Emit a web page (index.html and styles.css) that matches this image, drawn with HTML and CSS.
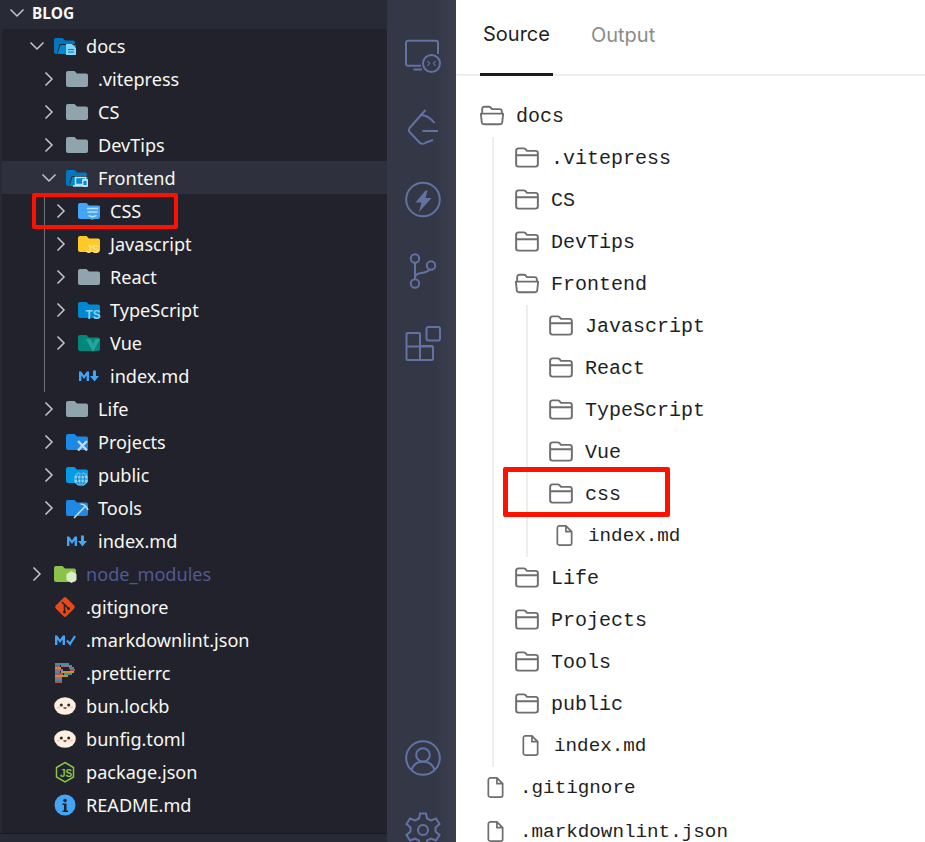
FILE: index.html
```html
<!DOCTYPE html>
<html lang="en">
<head>
<meta charset="utf-8">
<title>Blog tree</title>
<link rel="stylesheet" href="styles.css">
</head>
<body>
<svg class="defs" width="0" height="0" aria-hidden="true">
  <defs>
    <symbol id="ch-r" viewBox="0 0 14 16"><path d="M3.5 1.5 10 8l-6.500 6.500" fill="none" stroke="#c3c6cf" stroke-width="1.500"/></symbol>
    <symbol id="ch-d" viewBox="0 0 16 14"><path d="M1.500 3.500 8 10l6.500-6.500" fill="none" stroke="#c3c6cf" stroke-width="1.500"/></symbol>
    <symbol id="f-base" viewBox="0 0 22 18"><path d="M2 1h6.500l2.500 2.500h9a2 2 0 0 1 2 2V15a2 2 0 0 1-2 2H2a2 2 0 0 1-2-2V3a2 2 0 0 1 2-2z" fill="#90a4ae"/></symbol>
    <symbol id="f-blue" viewBox="0 0 22 18"><path d="M2 1h6.500l2.500 2.500h9a2 2 0 0 1 2 2V15a2 2 0 0 1-2 2H2a2 2 0 0 1-2-2V3a2 2 0 0 1 2-2z" fill="#1e88e5"/></symbol>
    <symbol id="f-open" viewBox="0 0 22 18"><path d="M2 1h6.500l2.500 2.500h8a2 2 0 0 1 2 2V7H7a2 2 0 0 0-2 1.500L3 17H2a2 2 0 0 1-2-2V3a2 2 0 0 1 2-2z" fill="#0277bd"/><path d="M6.500 8H22l-2.500 8a1.500 1.500 0 0 1-1.500 1H3.500z" fill="#0288d1"/></symbol>
    <symbol id="rf" viewBox="1.500 3.500 21 18"><path d="M2.500 6.500a2 2 0 0 1 2-2h4.700a2 2 0 0 1 1.500.700l1.300 1.500h7.500a2 2 0 0 1 2 2v9.800a2 2 0 0 1-2 2H4.500a2 2 0 0 1-2-2zM2.500 10.500h19" fill="none" stroke="#6e6e6e" stroke-width="1.700" stroke-linejoin="round"/></symbol>
    <symbol id="rfo" viewBox="1 3.500 22 18"><path d="M3 11V6.500a2 2 0 0 1 2-2h4.300a2 2 0 0 1 1.500.700l1.300 1.500h6.900a2 2 0 0 1 2 2V11M1.800 10.800h20.400l-.8 7.900a2 2 0 0 1-2 1.800H4.600a2 2 0 0 1-2-1.800z" fill="none" stroke="#6e6e6e" stroke-width="1.700" stroke-linejoin="round"/></symbol>
    <symbol id="rdoc" viewBox="4 1.500 17 22"><path d="M5 4.500a2 2 0 0 1 2-2h7l6 6v12a2 2 0 0 1-2 2H7a2 2 0 0 1-2-2zM14 2.500v6h6" fill="none" stroke="#6e6e6e" stroke-width="1.800" stroke-linejoin="round"/></symbol>
    <symbol id="md" viewBox="0 0 22 14"><path d="M1 12V2.500h2.200L6 6.500l2.700-4H11V12H8.600V6.500L6 10 3.400 6.500V12z" fill="#42a5f5"/><path d="M15 1.500h3V7h3l-4.500 5.500L12 7h3z" fill="#42a5f5"/></symbol>
    <symbol id="bun" viewBox="0 0 22 18"><ellipse cx="11" cy="9" rx="10.800" ry="8.700" fill="#fbf0df"/><circle cx="7.300" cy="8" r="1.500" fill="#2b2b2b"/><circle cx="14.700" cy="8" r="1.500" fill="#2b2b2b"/><path d="M9.200 10.300h3.600a1.800 1.800 0 0 1-3.600 0z" fill="#7a3030"/><ellipse cx="4.500" cy="10.500" rx="1.800" ry="1.100" fill="#f6c6cf"/><ellipse cx="17.500" cy="10.500" rx="1.800" ry="1.100" fill="#f6c6cf"/></symbol>
  </defs>
</svg>

<div class="window">
  <aside class="explorer">
    <div class="head">
      <svg class="chev-d"><use href="#ch-d"/></svg>
      <span class="head-title">BLOG</span>
    </div>
    <div class="tree">
      <div class="row d0">
        <svg class="chev-d"><use href="#ch-d"/></svg>
        <svg class="ico" viewBox="0 0 22 18"><use href="#f-open"/><path d="M12 7h6l4 4v7H12z" fill="#81d4fa"/><path d="M14 12.500h6M14 15h6" stroke="#0277bd" stroke-width="1.200"/></svg>
        <span>docs</span>
      </div>
      <div class="row d1"><svg class="chev-r"><use href="#ch-r"/></svg><svg class="ico"><use href="#f-base"/></svg><span>.vitepress</span></div>
      <div class="row d1"><svg class="chev-r"><use href="#ch-r"/></svg><svg class="ico"><use href="#f-base"/></svg><span>CS</span></div>
      <div class="row d1"><svg class="chev-r"><use href="#ch-r"/></svg><svg class="ico"><use href="#f-base"/></svg><span>DevTips</span></div>
      <div class="row d1 hover">
        <svg class="chev-d"><use href="#ch-d"/></svg>
        <svg class="ico" viewBox="0 0 22 18"><use href="#f-open"/><path d="M9.500 8.500h10v7h-10zM7 17h9" fill="#0288d1" stroke="#b3e5fc" stroke-width="1.500"/><rect x="16" y="10" width="6" height="8" rx="1" fill="#b3e5fc"/><rect x="17.500" y="12" width="3" height="4" fill="#0288d1"/></svg>
        <span>Frontend</span>
      </div>
      <div class="group">
        <div class="row d2">
          <svg class="chev-r"><use href="#ch-r"/></svg>
          <svg class="ico" viewBox="0 0 22 18"><path d="M2 1h6.500l2.500 2.500h9a2 2 0 0 1 2 2V15a2 2 0 0 1-2 2H2a2 2 0 0 1-2-2V3a2 2 0 0 1 2-2z" fill="#42a5f5"/><path d="M7.500 4H22l-1.500 11-6.500 3-6-3z" fill="#42a5f5"/><path d="M9 6.500h11M9.500 10h10M10.500 13.500l4 1.500 4-1.500" fill="none" stroke="#bbdefb" stroke-width="1.600"/></svg>
          <span>CSS</span>
        </div>
        <div class="row d2">
          <svg class="chev-r"><use href="#ch-r"/></svg>
          <svg class="ico" viewBox="0 0 22 18"><path d="M2 1h6.500l2.500 2.500h9a2 2 0 0 1 2 2V15a2 2 0 0 1-2 2H2a2 2 0 0 1-2-2V3a2 2 0 0 1 2-2z" fill="#ffca28"/><text x="8" y="18" class="ico-txt js">JS</text></svg>
          <span>Javascript</span>
        </div>
        <div class="row d2"><svg class="chev-r"><use href="#ch-r"/></svg><svg class="ico"><use href="#f-base"/></svg><span>React</span></div>
        <div class="row d2">
          <svg class="chev-r"><use href="#ch-r"/></svg>
          <svg class="ico" viewBox="0 0 22 18"><path d="M2 1h6.500l2.500 2.500h9a2 2 0 0 1 2 2V15a2 2 0 0 1-2 2H2a2 2 0 0 1-2-2V3a2 2 0 0 1 2-2z" fill="#0288d1"/><text x="7.500" y="18" class="ico-txt ts">TS</text></svg>
          <span>TypeScript</span>
        </div>
        <div class="row d2">
          <svg class="chev-r"><use href="#ch-r"/></svg>
          <svg class="ico" viewBox="0 0 22 18"><path d="M2 1h6.500l2.500 2.500h9a2 2 0 0 1 2 2V15a2 2 0 0 1-2 2H2a2 2 0 0 1-2-2V3a2 2 0 0 1 2-2z" fill="#00897b"/><path d="M8 5h14l-7 13z" fill="#26a69a"/><path d="M12.500 5h5L15 10z" fill="#00897b"/></svg>
          <span>Vue</span>
        </div>
        <div class="row d2 file"><svg class="ico ico-md"><use href="#md"/></svg><span>index.md</span></div>
      </div>
      <div class="row d1"><svg class="chev-r"><use href="#ch-r"/></svg><svg class="ico"><use href="#f-base"/></svg><span>Life</span></div>
      <div class="row d1">
        <svg class="chev-r"><use href="#ch-r"/></svg>
        <svg class="ico" viewBox="0 0 22 18"><use href="#f-blue"/><path d="M12 8l9 9.500M21 8l-9 9.500" stroke="#bbdefb" stroke-width="2.400"/></svg>
        <span>Projects</span>
      </div>
      <div class="row d1">
        <svg class="chev-r"><use href="#ch-r"/></svg>
        <svg class="ico" viewBox="0 0 22 18"><path d="M2 1h6.500l2.500 2.500h9a2 2 0 0 1 2 2V15a2 2 0 0 1-2 2H2a2 2 0 0 1-2-2V3a2 2 0 0 1 2-2z" fill="#039be5"/><circle cx="15" cy="13" r="7" fill="#81d4fa"/><path d="M8 13h14M15 6v14M10 9h10M10 17h10" stroke="#0277bd" stroke-width=".8" fill="none"/><ellipse cx="15" cy="13" rx="3.500" ry="7" fill="none" stroke="#0277bd" stroke-width=".8"/></svg>
        <span>public</span>
      </div>
      <div class="row d1">
        <svg class="chev-r"><use href="#ch-r"/></svg>
        <svg class="ico" viewBox="0 0 22 18"><use href="#f-blue"/><path d="M8 19 20 6.500M14.500 5c3 0 6 2.500 7.500 6" fill="none" stroke="#bbdefb" stroke-width="1.600"/></svg>
        <span>Tools</span>
      </div>
      <div class="row d1 file"><svg class="ico ico-md"><use href="#md"/></svg><span>index.md</span></div>
      <div class="row d0">
        <svg class="chev-r"><use href="#ch-r"/></svg>
        <svg class="ico" viewBox="0 0 22 18"><path d="M2 1h6.500l2.500 2.500h9a2 2 0 0 1 2 2V15a2 2 0 0 1-2 2H2a2 2 0 0 1-2-2V3a2 2 0 0 1 2-2z" fill="#8bc34a"/><path d="M17.500 6l5 3v6l-5 3-5-3V9z" fill="#dcedc8"/></svg>
        <span class="dim">node_modules</span>
      </div>
      <div class="row d0 file">
        <svg class="ico ico-tall" viewBox="0 0 22 22"><rect x="3.500" y="3.500" width="15" height="15" rx="2" transform="rotate(45 11 11)" fill="#e64a19"/><path d="M8 6l7 7M10.500 8.500v8" stroke="#21222c" stroke-width="1.500"/><circle cx="10.500" cy="16" r="1.500" fill="#21222c"/><circle cx="14.500" cy="12.500" r="1.500" fill="#21222c"/></svg>
        <span>.gitignore</span>
      </div>
      <div class="row d0 file">
        <svg class="ico ico-md" viewBox="0 0 22 14"><path d="M1 12V2.500h2.200L6 6.500l2.700-4H11V12H8.600V6.500L6 10 3.400 6.500V12z" fill="#42a5f5"/><path d="M13 7.500l3 3.500 5-8" fill="none" stroke="#42a5f5" stroke-width="2.200"/></svg>
        <span>.markdownlint.json</span>
      </div>
      <div class="row d0 file">
        <svg class="ico ico-tall" viewBox="0 0 22 22">
          <path d="M1 2h14" stroke="#56b3b4" stroke-width="1.500"/><path d="M1 4h5" stroke="#ea5e5e" stroke-width="1.500"/><path d="M7 4h11" stroke="#bf85bf" stroke-width="1.500"/><path d="M1 6h6" stroke="#f7ba3e" stroke-width="1.500"/><path d="M15 6h5" stroke="#56b3b4" stroke-width="1.500"/><path d="M1 8h8" stroke="#bf85bf" stroke-width="1.500"/><path d="M16 8h5" stroke="#ea5e5e" stroke-width="1.500"/><path d="M1 10h5" stroke="#56b3b4" stroke-width="1.500"/><path d="M7 10h13" stroke="#f7ba3e" stroke-width="1.500"/><path d="M1 12h8" stroke="#ea5e5e" stroke-width="1.500"/><path d="M10 12h8" stroke="#56b3b4" stroke-width="1.500"/><path d="M1 14h13" stroke="#f7ba3e" stroke-width="1.500"/><path d="M1 16h7" stroke="#bf85bf" stroke-width="1.500"/><path d="M1 18h7" stroke="#56b3b4" stroke-width="1.500"/><path d="M1 20h7" stroke="#ea5e5e" stroke-width="1.500"/>
        </svg>
        <span>.prettierrc</span>
      </div>
      <div class="row d0 file"><svg class="ico"><use href="#bun"/></svg><span>bun.lockb</span></div>
      <div class="row d0 file"><svg class="ico"><use href="#bun"/></svg><span>bunfig.toml</span></div>
      <div class="row d0 file">
        <svg class="ico ico-tall" viewBox="0 0 22 22"><path d="M11 1.500l8.500 5v9.500L11 21l-8.500-5V6.500z" fill="none" stroke="#8bc34a" stroke-width="1.500"/><text x="6" y="15.500" class="ico-txt node">JS</text></svg>
        <span>package.json</span>
      </div>
      <div class="row d0 file">
        <svg class="ico ico-tall" viewBox="0 0 22 22"><circle cx="11" cy="11" r="10.500" fill="#42a5f5"/><circle cx="11" cy="6.500" r="1.800" fill="#21222c"/><path d="M8.500 9.500h4v7h1.500v1.500H8.500v-1.500H10V11H8.500z" fill="#21222c"/></svg>
        <span>README.md</span>
      </div>
    </div>
    <div class="foot"></div>
    <div class="mark mark-left"></div>
  </aside>

  <nav class="activity">
    <div class="act-group">
      <svg class="act" viewBox="0 0 36 36"><path d="M16 27.700H3a2 2 0 0 1-2-2V4.700a2 2 0 0 1 2-2h28a2 2 0 0 1 2 2V16M8.500 31.500H17"/><circle cx="26.500" cy="25.500" r="8.500"/><path class="thin" d="M22.500 23l2 2.500-2 2.500M30.500 23l-2 2.500 2 2.500"/></svg>
      <svg class="act" viewBox="0 0 36 36"><path d="M20.500 0 5 17.500a3.500 3.500 0 0 0 0 5l9 9.500a5 5 0 0 0 7 .500l7-2.500M15.500 5c5 0 10 3 14 8M17.500 21H33"/></svg>
      <svg class="act" viewBox="0 0 36 36"><circle cx="18" cy="17.500" r="16.800"/><path class="solid" d="M20.500 8.500 10.500 20.500H16.500L14 30 26.500 16H20.500l2-7.500z"/></svg>
      <svg class="act" viewBox="0 0 36 36"><circle cx="10" cy="4.500" r="4.200"/><circle cx="10" cy="29.500" r="4.200"/><circle cx="26" cy="11.500" r="4.200"/><path d="M10 8.700v16.600M10 24c0-3 2-4.500 6-5s7-1 8.500-3.500"/></svg>
      <svg class="act" viewBox="0 0 36 36"><path d="M2.500 7H14a1 1 0 0 1 1 1v12h12a1 1 0 0 1 1 1v12a1 1 0 0 1-1 1H2.500a1 1 0 0 1-1-1V8a1 1 0 0 1 1-1zM1.500 20.500H28M15 20v14"/><rect x="21.500" y="1" width="13.500" height="13.500" rx="2"/></svg>
    </div>
    <div class="act-group">
      <svg class="act" viewBox="0 0 36 36"><circle cx="18" cy="18" r="16.800"/><circle cx="18" cy="15" r="6.800"/><path d="M6.500 30c2-6 6-8.500 11.500-8.500s9.500 2.500 11.500 8.500"/></svg>
      <svg class="act" viewBox="0 0 36 36"><circle cx="18" cy="18" r="5"/><path d="M15 1.500h6l1 5 4 2 5-2 3.500 5.500-4 3.500v4l4 3.500-3.500 5.500-5-2-4 2-1 5h-6l-1-5-4-2-5 2-3.500-5.500 4-3.500v-4l-4-3.500L5 6.500l5 2 4-2z"/></svg>
    </div>
  </nav>

  <main class="pane">
    <div class="tabs">
      <div class="tab active">Source</div>
      <div class="tab">Output</div>
    </div>
    <div class="rtree">
      <div class="rrow"><svg class="ri"><use href="#rfo"/></svg><span>docs</span></div>
      <div class="rgroup">
        <div class="rrow"><svg class="ri"><use href="#rf"/></svg><span>.vitepress</span></div>
        <div class="rrow"><svg class="ri"><use href="#rf"/></svg><span>CS</span></div>
        <div class="rrow"><svg class="ri"><use href="#rf"/></svg><span>DevTips</span></div>
        <div class="rrow"><svg class="ri"><use href="#rfo"/></svg><span>Frontend</span></div>
        <div class="rgroup">
          <div class="rrow"><svg class="ri"><use href="#rf"/></svg><span>Javascript</span></div>
          <div class="rrow"><svg class="ri"><use href="#rf"/></svg><span>React</span></div>
          <div class="rrow"><svg class="ri"><use href="#rf"/></svg><span>TypeScript</span></div>
          <div class="rrow"><svg class="ri"><use href="#rf"/></svg><span>Vue</span></div>
          <div class="rrow"><svg class="ri"><use href="#rf"/></svg><span>css</span></div>
          <div class="rrow rfile"><svg class="rd"><use href="#rdoc"/></svg><span>index.md</span></div>
        </div>
        <div class="rrow"><svg class="ri"><use href="#rf"/></svg><span>Life</span></div>
        <div class="rrow"><svg class="ri"><use href="#rf"/></svg><span>Projects</span></div>
        <div class="rrow"><svg class="ri"><use href="#rf"/></svg><span>Tools</span></div>
        <div class="rrow"><svg class="ri"><use href="#rf"/></svg><span>public</span></div>
        <div class="rrow rfile"><svg class="rd"><use href="#rdoc"/></svg><span>index.md</span></div>
      </div>
      <div class="rrow rfile"><svg class="rd"><use href="#rdoc"/></svg><span>.gitignore</span></div>
      <div class="rrow rfile last"><svg class="rd"><use href="#rdoc"/></svg><span>.markdownlint.json</span></div>
    </div>
    <div class="mark mark-right"></div>
  </main>
</div>
</body>
</html>
```
FILE: styles.css
```css
* { box-sizing: border-box; }
html, body { margin: 0; padding: 0; height: 842px; overflow: hidden; background: #fff; }
.defs { position: absolute; }
.window { display: flex; width: 925px; height: 842px; overflow: hidden; position: relative; }

/* Explorer */
.explorer {
  width: 387px; flex: none; display: flex; flex-direction: column;
  background: #21222c; border-left: 2px solid #282a36;
  font-family: "Noto Sans", sans-serif; font-size: 18.1px; color: #f8f8f2;
}
.head { height: 29px; margin-left: -2px; padding: 0 0 3px 9px; background: #282a36; display: flex; align-items: center; flex: none; }
.head .chev-d { margin-right: 7px; }
.head-title { font-size: 15.5px; font-weight: 700; }
.tree { flex: 1; }
.foot { height: 9px; background: #282a36; margin-left: -2px; border-top: 1px solid #191a21; flex: none; }
.row { height: 33px; display: flex; align-items: center; white-space: nowrap; }
.row.hover { background: #2e303e; }
.d0 { padding-left: 27px; }
.d1 { padding-left: 39px; }
.d2 { padding-left: 51px; }
.row.file.d0 { padding-left: 52px; }
.row.file.d1 { padding-left: 64px; }
.row.file.d2 { padding-left: 76px; }
.chev-r { width: 14px; height: 16px; flex: none; margin-left: 1px; margin-right: 10px; }
.chev-d { width: 16px; height: 14px; flex: none; margin-right: 9px; }
.ico { width: 22px; height: 18px; flex: none; margin-right: 10px; overflow: visible; }
.ico-tall { height: 22px; }
.ico-md { height: 14px; }
.ico-txt { font-family: "Liberation Sans", sans-serif; font-weight: 700; }
.js { font-size: 11px; fill: #ffe082; }
.ts { font-size: 12px; fill: #81d4fa; }
.node { font-size: 10px; fill: #8bc34a; }
.dim { color: #4f5b93; }
.group { position: relative; }
.group::before { content: ""; position: absolute; left: 42px; top: 0; bottom: 0; width: 1px; background: #6f7078; }

/* Activity bar */
.activity {
  width: 69px; flex: none; display: flex; flex-direction: column; justify-content: space-between;
  background: linear-gradient(90deg, #343746 0%, #343746 70%, #3c3f4e 100%);
  padding: 38px 0 0 18px;
  height: 848px;
}
.act-group { display: flex; flex-direction: column; gap: 36px; }
.act { width: 36px; height: 36px; fill: none; stroke: #6272a4; stroke-width: 2; display: block; overflow: visible; }
.act .solid { fill: #6272a4; stroke: none; }
.act .thin { stroke-width: 1.200; }

/* Right pane */
.pane { flex: 1; background: #fff; position: relative; }
.tabs { height: 76px; border-bottom: 2px solid #eee; display: flex; padding-left: 24px; gap: 35px; font-family: Inter, sans-serif; font-size: 20px; color: #8b8b8b; }
.tab { padding: 0 3px 6px; display: flex; align-items: center; height: 76px; }
.tab.active { color: #1f1f1f; border-bottom: 3px solid #1a1a1a; }
.rtree { padding: 19px 0 0 24px; font-family: "Liberation Mono", monospace; font-size: 20px; color: #1f1f1f; }
.rrow { height: 42px; display: flex; align-items: center; gap: 12px; white-space: nowrap; }
.ri { width: 24px; height: 21px; flex: none; margin-top: -2px; }
.rd { width: 17px; height: 21px; flex: none; margin-top: -1px; }
.rgroup { margin-left: 12px; padding-left: 21px; border-left: 2px solid #eee; }
.rgroup .rgroup { margin-left: 11px; padding-left: 21px; }
.rfile { padding-left: 7px; gap: 16px; font-size: 19.25px; }
.rgroup .rfile { gap: 15px; }
.rrow.last { margin-top: 2px; }

/* Red annotation boxes */
.mark { position: absolute; border: 4px solid #fe1100; border-radius: 2px; }
.mark-left { left: 32px; top: 193px; width: 146px; height: 36px; }
.mark-right { left: 47px; top: 467px; width: 167px; height: 50px; border-width: 5px; }
```
